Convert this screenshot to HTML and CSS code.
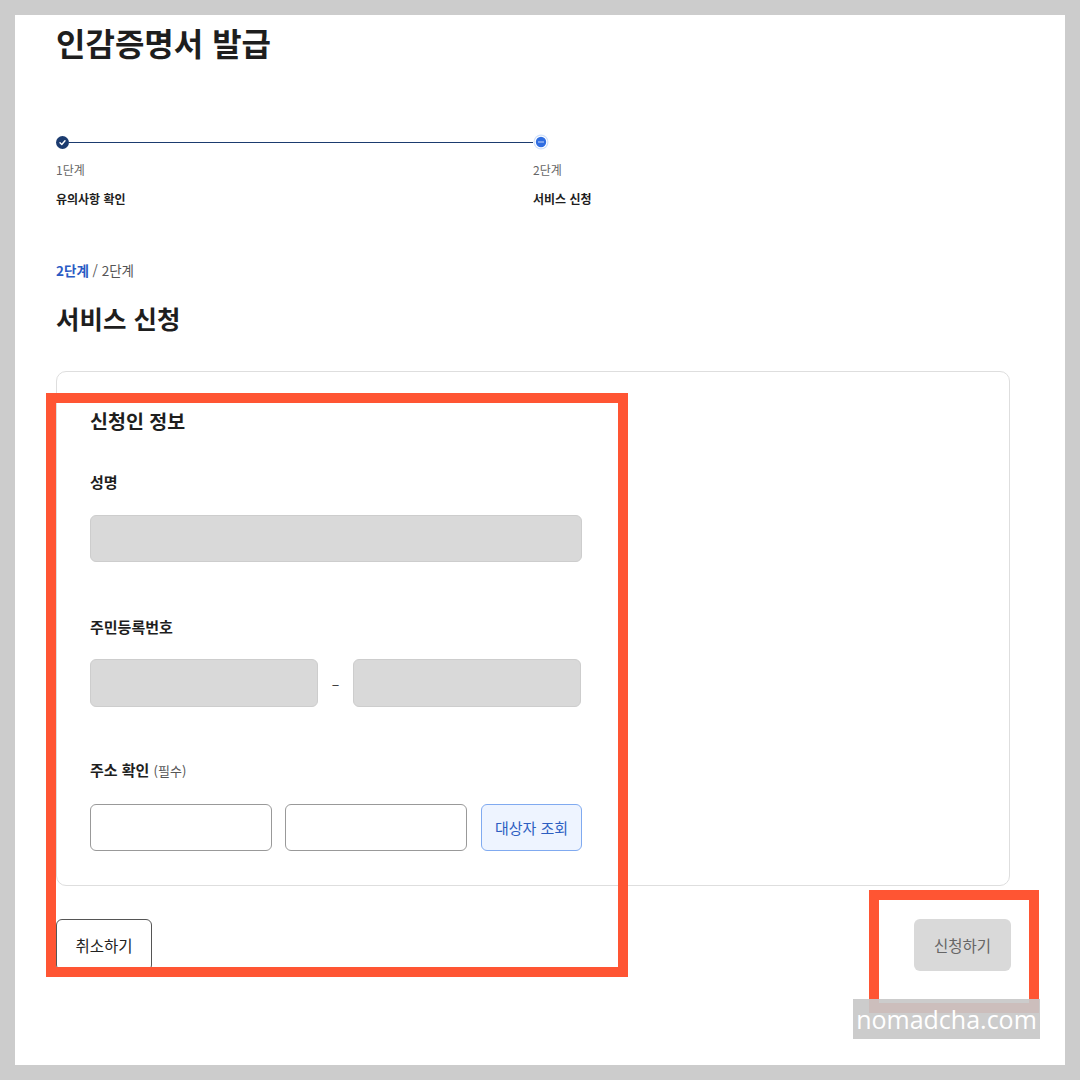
FILE: index.html
```html
<!DOCTYPE html>
<html lang="ko">
<head>
  <meta charset="UTF-8">
  <meta name="viewport" content="width=device-width, initial-scale=1.0">
  <title>인감증명서 발급</title>
  <link rel="stylesheet" href="styles.css">
</head>
<body>

  <div class="page">
    <h1 class="title">인감증명서 발급</h1>

    <div class="stepper">
      <div class="step done">
        <div class="track">
          <span class="dot">
            <svg viewBox="0 0 13 13" width="13" height="13"><path d="M4 6.8 L5.8 8.5 L9 4.8" fill="none" stroke="#fff" stroke-width="1.4" stroke-linecap="round" stroke-linejoin="round"/></svg>
          </span>
          <span class="line"></span>
        </div>
        <div class="step-no">1단계</div>
        <div class="step-name">유의사항 확인</div>
      </div>
      <div class="step current">
        <div class="track">
          <span class="dot">
            <svg viewBox="0 0 16 16" width="16" height="16">
              <circle cx="8" cy="8" r="7.5" fill="#cfe0fb"/>
              <circle cx="8" cy="8" r="6.3" fill="#fff"/>
              <circle cx="8" cy="8" r="5.2" fill="#2f6de1"/>
              <circle cx="6" cy="8" r="0.7" fill="#fff"/>
              <circle cx="8" cy="8" r="0.7" fill="#fff"/>
              <circle cx="10" cy="8" r="0.7" fill="#fff"/>
            </svg>
          </span>
        </div>
        <div class="step-no">2단계</div>
        <div class="step-name">서비스 신청</div>
      </div>
    </div>

    <div class="crumb"><b>2단계</b> / 2단계</div>
    <h2 class="section-title">서비스 신청</h2>

    <div class="card">
      <h3 class="card-title">신청인 정보</h3>

      <div class="field-label">성명</div>
      <div class="input filled"></div>

      <div class="field-label gap">주민등록번호</div>
      <div class="input-row">
        <div class="input filled"></div>
        <span class="dash">–</span>
        <div class="input filled"></div>
      </div>

      <div class="field-label gap last">주소 확인 <span class="req">(필수)</span></div>
      <div class="input-row addr">
        <div class="input blank"></div>
        <div class="input blank"></div>
        <button class="lookup">대상자 조회</button>
      </div>
    </div>

    <div class="actions">
      <button class="btn cancel">취소하기</button>
      <button class="btn submit">신청하기</button>
    </div>

    <div class="mark mark-form"></div>
    <div class="mark mark-submit"></div>
    <div class="watermark">nomadcha.com</div>
  </div>

</body>
</html>
```

FILE: styles.css
```css
body {
  margin: 0;
  padding: 15px;
  background: #cccccc;
  font-family: "Noto Sans CJK KR", "Noto Sans", sans-serif;
  color: #1e1e1e;
}
.page {
  position: relative;
  box-sizing: border-box;
  width: 1050px;
  height: 1050px;
  background: #fff;
  padding: 7px 55px 0 41px;
}
.title {
  margin: 0;
  font-size: 32px;
  line-height: 40px;
  font-weight: 700;
  color: #1e1e1e;
}

/* stepper */
.stepper {
  display: flex;
  margin-top: 72px;
}
.step {
  width: 477px;
}
.track {
  display: flex;
  align-items: center;
  height: 16px;
}
.step.done .dot {
  width: 13px;
  height: 13px;
  border-radius: 50%;
  background: #1b3b6f;
  display: flex;
}
.step.current .dot {
  display: flex;
  width: 16px;
  height: 16px;
}
.line {
  flex: 1;
  height: 1px;
  background: #1b3b6f;
}
.step-no {
  margin-top: 11px;
  font-size: 12px;
  line-height: 18px;
  color: #666;
}
.step-name {
  margin-top: 11px;
  font-size: 12px;
  line-height: 18px;
  font-weight: 700;
  color: #1e1e1e;
}

.crumb {
  margin-top: 52px;
  font-size: 13.5px;
  line-height: 20px;
  color: #555;
}
.crumb b {
  color: #2a5bc4;
}
.section-title {
  margin: 22px 0 0;
  font-size: 25.5px;
  line-height: 32px;
  font-weight: 700;
}

/* form card */
.card {
  margin-top: 37px;
  border: 1px solid #dedede;
  border-radius: 10px;
  padding: 36px 33px 34px;
}
.card-title {
  margin: 0;
  font-size: 19.5px;
  line-height: 26px;
  font-weight: 700;
}
.field-label {
  margin-top: 38px;
  margin-bottom: 23px;
  font-size: 15px;
  line-height: 20px;
  font-weight: 700;
}
.field-label.gap {
  margin-top: 55px;
  margin-bottom: 22px;
}
.field-label.last {
  margin-top: 53px;
  margin-bottom: 23px;
}
.req {
  font-size: 13px;
  font-weight: 400;
  color: #555;
}
.input {
  box-sizing: border-box;
  height: 47px;
  width: 492px;
  border-radius: 6px;
}
.input.filled {
  background: #d9d9d9;
  border: 1px solid #cdcdcd;
}
.input.blank {
  background: #fff;
  border: 1px solid #999;
}
.input-row {
  display: flex;
  align-items: center;
  width: 492px;
}
.input-row .input.filled {
  width: 228px;
  height: 48px;
}
.dash {
  width: 35px;
  text-align: center;
  font-size: 14px;
  color: #333;
}
.input-row.addr {
  gap: 13px;
}
.input-row.addr .input {
  width: 182px;
}
.lookup {
  box-sizing: border-box;
  width: 101px;
  height: 47px;
  margin-left: 1px;
  border: 1px solid #80aaf0;
  border-radius: 6px;
  background: #eef4ff;
  color: #2d5fc2;
  font-family: inherit;
  font-size: 15px;
}

/* bottom buttons */
.actions {
  display: flex;
  justify-content: space-between;
  margin-top: 33px;
  margin-right: -1px;
}
.btn {
  box-sizing: border-box;
  height: 52px;
  border-radius: 6px;
  font-family: inherit;
  font-size: 15.5px;
}
.cancel {
  width: 96px;
  background: #fff;
  border: 1px solid #555;
  color: #222;
}
.submit {
  width: 97px;
  background: #d9d9d9;
  border: none;
  color: #666;
}

/* annotations over the screenshot */
.mark {
  position: absolute;
  box-sizing: border-box;
  border: 10px solid #ff5533;
}
.mark-form {
  left: 31px;
  top: 378px;
  width: 582px;
  height: 584px;
}
.mark-submit {
  left: 854px;
  top: 875px;
  width: 170px;
  height: 123px;
}
.watermark {
  position: absolute;
  left: 838px;
  top: 984px;
  width: 187px;
  height: 40px;
  background: rgba(200, 200, 200, 0.92);
  color: #fff;
  font-family: "Open Sans", sans-serif;
  font-size: 25px;
  line-height: 40px;
  text-align: center;
  white-space: nowrap;
}
```
